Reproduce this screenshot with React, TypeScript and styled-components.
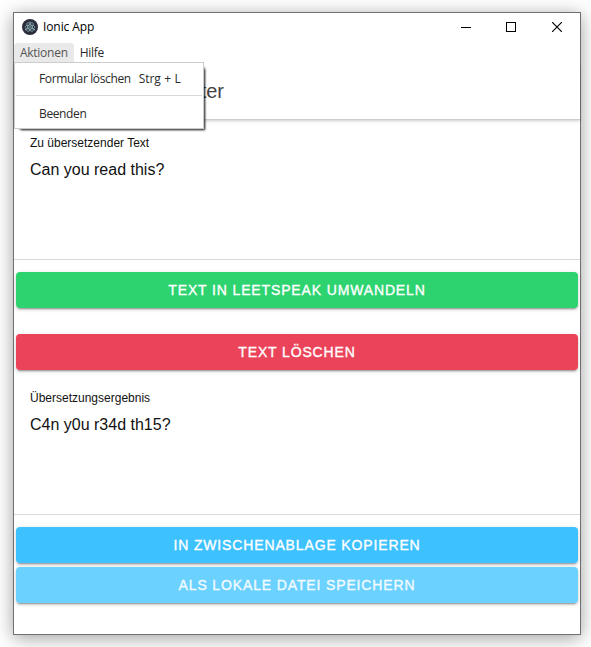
import React from "react";
import styled, { createGlobalStyle } from "styled-components";

const GlobalStyle = createGlobalStyle`
  *, *::before, *::after { box-sizing: border-box; }
  html, body { margin: 0; background: #fff; overflow: hidden; }
`;

const Desktop = styled.div`
  width: 591px;
  height: 647px;
  padding: 12px 0 0 13px;
  overflow: hidden;
  background: #fff;
  font-family: "Liberation Sans", Arial, sans-serif;
`;

const AppWindow = styled.div`
  width: 568px;
  height: 623px;
  display: flex;
  flex-direction: column;
  background: #fff;
  border: 1px solid #707070;
  box-shadow: 0 3px 17px rgba(0, 0, 0, 0.38);
`;

const TitleBar = styled.header`
  height: 28px;
  margin-bottom: 2px;
  flex: none;
  display: flex;
  align-items: center;
  padding-left: 8px;
`;

const WindowTitle = styled.span`
  flex: 1;
  padding-left: 5px;
  font: 12px/16px "Open Sans", "Noto Sans", sans-serif;
  letter-spacing: -0.1px;
  color: #000;
`;

const WindowButton = styled.button<{ $width?: number }>`
  width: ${(p) => p.$width ?? 45}px;
  height: 28px;
  padding: 0;
  border: 0;
  background: transparent;
  display: grid;
  place-items: center;
`;

const MenuBar = styled.nav`
  height: 20px;
  flex: none;
  display: flex;
  position: relative;
  z-index: 2;
`;

const MenuTitle = styled.div<{ $open?: boolean }>`
  height: 20px;
  padding: 0 6px;
  border-radius: 3px 3px 0 0;
  background: ${(p) => (p.$open ? "#e9e9e9" : "transparent")};
  color: ${(p) => (p.$open ? "#555" : "#2a2a2a")};
  font: 12px/20px "Open Sans", "Noto Sans", sans-serif;
  letter-spacing: -0.27px;
`;

const Dropdown = styled.div`
  position: absolute;
  top: 19px;
  left: 0;
  width: 190px;
  height: 67px;
  padding: 5px 1px 0;
  background: #fff;
  border: 1px solid #ccc;
  box-shadow: 4px 4px 2px -3px rgba(0, 0, 0, 0.75), 3px 3px 2px -2px rgba(0, 0, 0, 0.35);
`;

const DropdownItem = styled.div`
  height: 22px;
  display: flex;
  padding-left: 23px;
  white-space: nowrap;
  font: 12px/22px "Open Sans", "Noto Sans", sans-serif;
  letter-spacing: -0.37px;
  color: #2a2a2a;
`;

const Shortcut = styled.span`
  padding-left: 8px;
  letter-spacing: -0.1px;
  word-spacing: 0.5px;
`;

const Separator = styled.div`
  height: 1px;
  margin: 5px 0 7px;
  background: #d7d7d7;
`;

const Toolbar = styled.div`
  height: 56px;
  flex: none;
  display: flex;
  align-items: center;
  padding-left: 16px;
  position: relative;
  z-index: 1;
  background: #fff;
  box-shadow: 0 1px 0 #cdcdcd, 0 2px 2px rgba(0, 0, 0, 0.12), 0 3px 4px rgba(0, 0, 0, 0.06);
`;

const Heading = styled.h1`
  width: 194px;
  margin: 0;
  text-align: right;
  font-size: 20px;
  font-weight: 400;
  line-height: 24px;
  white-space: nowrap;
  color: #424242;
`;

const Field = styled.section`
  height: 141px;
  padding: 16px 16px 0;
  border-bottom: 1px solid #dadada;
`;

const FieldLabel = styled.div`
  font-size: 12px;
  line-height: 16px;
  color: #111;
`;

const FieldText = styled.div`
  margin-top: 8px;
  font-size: 16px;
  line-height: 21px;
  color: #111;
`;

const ActionButton = styled.button<{ $color: string; $gap: number; $faded?: boolean }>`
  display: block;
  width: 562px;
  height: 36px;
  margin: ${(p) => p.$gap}px 2px 0;
  padding: 0;
  border: 0;
  border-radius: 4px;
  background: ${(p) => p.$color};
  color: ${(p) => (p.$faded ? "#f2fbff" : "#fff")};
  box-shadow: 0 3px 1px -2px rgba(0, 0, 0, 0.2), 0 2px 2px 0 rgba(0, 0, 0, 0.14),
    0 1px 5px 0 rgba(0, 0, 0, 0.12);
  font: 14px/36px "Liberation Sans", Arial, sans-serif;
  letter-spacing: 0.86px;
  text-transform: uppercase;
  -webkit-text-stroke: 0.35px currentColor;
`;

const ResultGroup = styled.div`
  padding-top: 4px;
`;

const ElectronIcon = () => (
  <svg width="16" height="16" viewBox="0 0 16 16">
    <circle cx="8" cy="8" r="8" fill="#2b2e3a" />
    <g fill="none" stroke="#8fb4bd" strokeWidth="0.7">
      <ellipse cx="8" cy="8" rx="5" ry="2" />
      <ellipse cx="8" cy="8" rx="5" ry="2" transform="rotate(60 8 8)" />
      <ellipse cx="8" cy="8" rx="5" ry="2" transform="rotate(120 8 8)" />
    </g>
    <g fill="#9fc3cb">
      <circle cx="8" cy="8" r="0.8" />
      <circle cx="3.7" cy="10.5" r="0.7" />
      <circle cx="12.3" cy="10.5" r="0.7" />
      <circle cx="8" cy="3.1" r="0.7" />
    </g>
  </svg>
);

const MinimizeIcon = () => (
  <svg width="10" height="10" shapeRendering="crispEdges">
    <path d="M0 5.5H10" stroke="#000" />
  </svg>
);

const MaximizeIcon = () => (
  <svg width="10" height="10" shapeRendering="crispEdges">
    <rect x="0.5" y="0.5" width="9" height="9" fill="none" stroke="#000" />
  </svg>
);

const CloseIcon = () => (
  <svg width="10" height="10">
    <path d="M0 0L10 10M10 0L0 10" stroke="#000" strokeWidth="1.15" />
  </svg>
);

export default function App() {
  return (
    <Desktop>
      <GlobalStyle />
      <AppWindow>
        <TitleBar>
          <ElectronIcon />
          <WindowTitle>Ionic App</WindowTitle>
          <WindowButton aria-label="Minimieren"><MinimizeIcon /></WindowButton>
          <WindowButton aria-label="Maximieren"><MaximizeIcon /></WindowButton>
          <WindowButton aria-label="Schließen" $width={47}><CloseIcon /></WindowButton>
        </TitleBar>
        <MenuBar>
          <MenuTitle $open>Aktionen</MenuTitle>
          <MenuTitle>Hilfe</MenuTitle>
          <Dropdown>
            <DropdownItem>
              <span>Formular löschen</span>
              <Shortcut>Strg + L</Shortcut>
            </DropdownItem>
            <Separator />
            <DropdownItem>Beenden</DropdownItem>
          </Dropdown>
        </MenuBar>
        <Toolbar>
          <Heading>ter</Heading>
        </Toolbar>
        <main>
          <Field>
            <FieldLabel>Zu übersetzender Text</FieldLabel>
            <FieldText>Can you read this?</FieldText>
          </Field>
          <ActionButton $color="#2dd36f" $gap={12}>Text in Leetspeak umwandeln</ActionButton>
          <ActionButton $color="#eb445a" $gap={26}>Text löschen</ActionButton>
          <ResultGroup>
            <Field>
              <FieldLabel>Übersetzungsergebnis</FieldLabel>
              <FieldText>C4n y0u r34d th15?</FieldText>
            </Field>
            <ActionButton $color="#3dc2ff" $gap={12}>In Zwischenablage kopieren</ActionButton>
            <ActionButton $color="#6bd1ff" $gap={4} $faded>Als lokale Datei speichern</ActionButton>
          </ResultGroup>
        </main>
      </AppWindow>
    </Desktop>
  );
}
